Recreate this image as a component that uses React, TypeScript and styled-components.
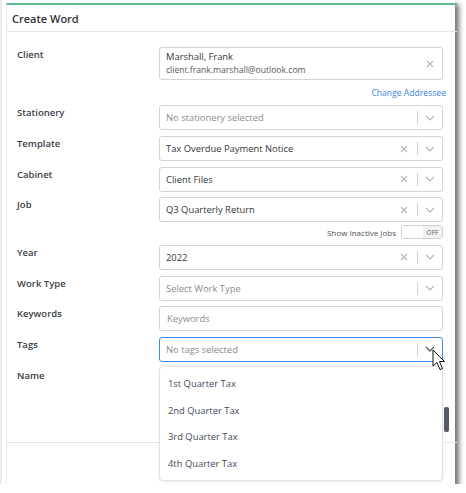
import { FC } from "react";
import styled, { createGlobalStyle } from "styled-components";

const GlobalStyle = createGlobalStyle`
    html, body {
        margin:0;
        padding:0;
        background:#ffffff;
    }
    body {
        font-family:"Open Sans", "Noto Sans", sans-serif;
        color:#333;
    }
`

const tags = ["1st Quarter Tax", "2nd Quarter Tax", "3rd Quarter Tax", "4th Quarter Tax"];

const ClearIcon: FC = () => (
    <svg width="8" height="8" viewBox="0 0 8 8">
        <path d="M1 1 L7 7 M7 1 L1 7" stroke="#b5b5b5" strokeWidth="1.1" fill="none" />
    </svg>
);

const ChevronIcon: FC<{ dark?: boolean }> = ({ dark }) => (
    <svg width="10" height="6" viewBox="0 0 10 6">
        <path d="M1 1 L5 5 L9 1" stroke={dark ? "#5a5f66" : "#b5b5b5"} strokeWidth={dark ? 1.4 : 1.1} fill="none" />
    </svg>
);

const CursorIcon: FC = () => (
    <svg width="14" height="22" viewBox="0 0 14 22">
        <path d="M1 1 L1 17 L5 13.5 L8 20.5 L10.5 19.5 L7.5 12.5 L12.5 12.5 Z" fill="#ffffff" stroke="#111" strokeWidth="1" strokeLinejoin="round" />
    </svg>
);

type SelectProps = {
    value?: string;
    placeholder?: string;
    clearable?: boolean;
    focused?: boolean;
};

const Select: FC<SelectProps> = ({ value, placeholder, clearable, focused }) => (
    <SBox focused={focused}>
        <SValue muted={!value}>{value ?? placeholder}</SValue>
        {clearable && <SClear><ClearIcon /></SClear>}
        <SSeparator />
        <SChevron><ChevronIcon dark={focused} /></SChevron>
    </SBox>
);

const App: FC = () => {
    return (
        <>
        <GlobalStyle />
        <SFrame>
            <SModal>
                <SHeader>Create Word</SHeader>
                <SBody>
                    <SRow>
                        <SLabel>Client</SLabel>
                        <SClientBox>
                            <SClientText>
                                <SClientName>Marshall, Frank</SClientName>
                                <SClientMail>client.frank.marshall@outlook.com</SClientMail>
                            </SClientText>
                            <SChevron><ClearIcon /></SChevron>
                        </SClientBox>
                    </SRow>
                    <SHelperRow>
                        <SLink>Change Addressee</SLink>
                    </SHelperRow>
                    <SRow>
                        <SLabel>Stationery</SLabel>
                        <Select placeholder="No stationery selected" />
                    </SRow>
                    <SRow>
                        <SLabel>Template</SLabel>
                        <Select value="Tax Overdue Payment Notice" clearable />
                    </SRow>
                    <SRow>
                        <SLabel>Cabinet</SLabel>
                        <Select value="Client Files" clearable />
                    </SRow>
                    <SRow>
                        <SLabel>Job</SLabel>
                        <Select value="Q3 Quarterly Return" clearable />
                    </SRow>
                    <SToggleRow>
                        <SToggleLabel>Show Inactive Jobs</SToggleLabel>
                        <SToggle>
                            <SToggleKnob />
                            <SToggleText>OFF</SToggleText>
                        </SToggle>
                    </SToggleRow>
                    <SRow>
                        <SLabel>Year</SLabel>
                        <Select value="2022" clearable />
                    </SRow>
                    <SRow>
                        <SLabel>Work Type</SLabel>
                        <Select placeholder="Select Work Type" />
                    </SRow>
                    <SRow>
                        <SLabel>Keywords</SLabel>
                        <SInput placeholder="Keywords" />
                    </SRow>
                    <SRow>
                        <SLabel>Tags</SLabel>
                        <SSelectWrap>
                            <Select placeholder="No tags selected" focused />
                            <SCursor><CursorIcon /></SCursor>
                            <SMenu>
                                {tags.map((t) => <SMenuItem key={t}>{t}</SMenuItem>)}
                            </SMenu>
                        </SSelectWrap>
                    </SRow>
                    <SRow>
                        <SLabel>Name</SLabel>
                        <SNameSpace />
                    </SRow>
                    <SThumb />
                </SBody>
                <SFooter />
            </SModal>
        </SFrame>
        </>
    );
};

export default App;

const SFrame = styled.div`
    width:455px;
    height:484px;
    border-left:2px solid #ececec;
    background:#ffffff;
    box-shadow:4px 4px 5px rgba(0,0,0,0.55);
    padding:3px 0 0 4px;
    box-sizing:border-box;
    display:flex;
`

const SModal = styled.div`
    flex:1;
    display:flex;
    flex-direction:column;
    border-top:2px solid #5bbd8f;
    border-left:1px solid #e8e8e8;
`

const SHeader = styled.div`
    height:27px;
    box-sizing:border-box;
    padding:0 0 0 5px;
    display:flex;
    align-items:center;
    font-size:11px;
    font-weight:600;
    color:#333;
    border-bottom:1px solid #e6e6e6;
`

const SBody = styled.div`
    position:relative;
    display:flex;
    flex-direction:column;
    gap:5.7px;
    padding:15px 14px 0 10px;
    height:411px;
    box-sizing:border-box;
    border-bottom:1px solid #e6e6e6;
`

const SRow = styled.div`
    display:grid;
    grid-template-columns:142px 284px;
    align-items:start;
`

const SLabel = styled.div`
    font-size:9.5px;
    font-weight:600;
    line-height:16px;
    color:#3b4046;
`

const SBox = styled.div<{ focused?: boolean }>`
    height:25px;
    box-sizing:border-box;
    border:${({ focused }) => (focused ? "1.5px solid #3d8be8" : "1px solid #d4d4d4")};
    border-radius:3px;
    display:flex;
    align-items:center;
    padding-left:6px;
    background:#fff;
`

const SValue = styled.div<{ muted?: boolean }>`
    flex:1;
    font-size:9.4px;
    color:${({ muted }) => (muted ? "#8a8d91" : "#33373b")};
    white-space:nowrap;
`

const SClear = styled.div`
    width:22px;
    display:flex;
    justify-content:center;
    align-items:center;
`

const SSeparator = styled.div`
    width:1px;
    height:13px;
    background:#d0d0d0;
    margin-left:2px;
`

const SChevron = styled.div`
    width:24px;
    display:flex;
    justify-content:center;
    align-items:center;
`

const SClientBox = styled.div`
    height:33px;
    box-sizing:border-box;
    border:1px solid #d4d4d4;
    border-radius:3px;
    display:flex;
    align-items:center;
    padding-left:6px;
`

const SClientText = styled.div`
    flex:1;
    display:flex;
    flex-direction:column;
`

const SClientName = styled.div`
    font-size:9.4px;
    line-height:14px;
    color:#33373b;
`

const SClientMail = styled.div`
    font-size:8.6px;
    line-height:13px;
    color:#55595e;
`

const SHelperRow = styled.div`
    display:flex;
    justify-content:flex-end;
    height:14px;
    margin-right:-3px;
`

const SLink = styled.span`
    font-size:8.6px;
    line-height:14px;
    color:#3a86e0;
`

const SToggleRow = styled.div`
    display:flex;
    justify-content:flex-end;
    align-items:center;
    gap:5px;
    height:14px;
    margin-top:-3px;
`

const SToggleLabel = styled.span`
    font-size:8px;
    color:#4d5257;
`

const SToggle = styled.div`
    width:42px;
    height:14px;
    box-sizing:border-box;
    border:1px solid #cfcfcf;
    border-radius:3px;
    display:flex;
    overflow:hidden;
`

const SToggleKnob = styled.div`
    width:21px;
    background:#fff;
`

const SToggleText = styled.div`
    flex:1;
    background:#f2f2f2;
    font-size:6.5px;
    color:#555;
    display:flex;
    align-items:center;
    justify-content:center;
`

const SInput = styled.input`
    height:25px;
    box-sizing:border-box;
    border:1px solid #d4d4d4;
    border-radius:3px;
    padding:0 7px;
    font-family:"Open Sans", "Noto Sans", sans-serif;
    font-size:9.4px;
    color:#33373b;
    outline:none;
    &::placeholder {
        color:#8a8d91;
    }
`

const SSelectWrap = styled.div`
    position:relative;
`

const SCursor = styled.div`
    position:absolute;
    left:273px;
    top:12px;
    z-index:3;
`

const SMenu = styled.div`
    position:absolute;
    left:0;
    right:0;
    top:29px;
    padding:3px 0;
    background:#fff;
    border:1px solid #e2e2e2;
    border-radius:4px;
    box-shadow:0 1px 3px rgba(0,0,0,0.08);
    z-index:2;
`

const SMenuItem = styled.div`
    height:26.75px;
    display:flex;
    align-items:center;
    padding-left:8px;
    font-size:9.4px;
    color:#3e4a5a;
`

const SNameSpace = styled.div`
    height:25px;
`

const SThumb = styled.div`
    position:absolute;
    left:437px;
    top:375px;
    width:5px;
    height:25px;
    border-radius:2px;
    background:#565c64;
`

const SFooter = styled.div`
    flex:1;
`
